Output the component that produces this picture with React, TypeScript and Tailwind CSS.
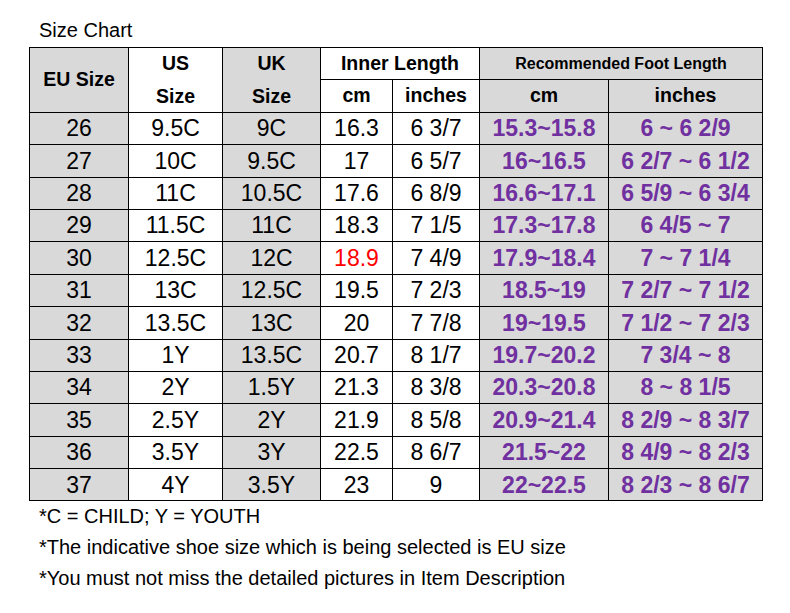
import React from 'react';

type Row = [string, string, string, string, string, string, string];

const rows: Row[] = [
  ['26', '9.5C', '9C', '16.3', '6 3/7', '15.3~15.8', '6 ~ 6 2/9'],
  ['27', '10C', '9.5C', '17', '6 5/7', '16~16.5', '6 2/7 ~ 6 1/2'],
  ['28', '11C', '10.5C', '17.6', '6 8/9', '16.6~17.1', '6 5/9 ~ 6 3/4'],
  ['29', '11.5C', '11C', '18.3', '7 1/5', '17.3~17.8', '6 4/5 ~ 7'],
  ['30', '12.5C', '12C', '18.9', '7 4/9', '17.9~18.4', '7 ~ 7 1/4'],
  ['31', '13C', '12.5C', '19.5', '7 2/3', '18.5~19', '7 2/7 ~ 7 1/2'],
  ['32', '13.5C', '13C', '20', '7 7/8', '19~19.5', '7 1/2 ~ 7 2/3'],
  ['33', '1Y', '13.5C', '20.7', '8 1/7', '19.7~20.2', '7 3/4 ~ 8'],
  ['34', '2Y', '1.5Y', '21.3', '8 3/8', '20.3~20.8', '8 ~ 8 1/5'],
  ['35', '2.5Y', '2Y', '21.9', '8 5/8', '20.9~21.4', '8 2/9 ~ 8 3/7'],
  ['36', '3.5Y', '3Y', '22.5', '8 6/7', '21.5~22', '8 4/9 ~ 8 2/3'],
  ['37', '4Y', '3.5Y', '23', '9', '22~22.5', '8 2/3 ~ 8 6/7'],
];

const gray = 'bg-[#d9d9d9]';
const cell = 'flex items-center justify-center whitespace-nowrap';
const head = `${cell} text-[19.5px] font-bold`;

export default function App() {
  return (
    <div
      className="w-[790px] h-[613px] bg-white pt-[14px] pl-[29px] text-black"
      style={{ fontFamily: '"Liberation Sans", Arial, sans-serif' }}
    >
      <div className="pl-[10px] text-[20px] leading-[32px]">Size Chart</div>

      <div className="mt-px grid w-fit grid-cols-[98px_93px_97px_71px_86px_128px_153px] auto-rows-[31.4px] gap-px bg-black p-px">
        {/* header */}
        <div className={`${head} ${gray} row-span-2`}>EU Size</div>
        <div className={`${head} bg-white row-span-2 flex-col leading-[32.4px]`}>
          <span>US</span>
          <span>Size</span>
        </div>
        <div className={`${head} ${gray} row-span-2 flex-col leading-[32.4px]`}>
          <span>UK</span>
          <span>Size</span>
        </div>
        <div className={`${head} bg-white col-span-2`}>Inner Length</div>
        <div className={`${cell} ${gray} col-span-2 text-[16px] font-bold`}>Recommended Foot Length</div>
        <div className={`${head} bg-white`}>cm</div>
        <div className={`${head} bg-white`}>inches</div>
        <div className={`${head} ${gray}`}>cm</div>
        <div className={`${head} ${gray}`}>inches</div>

        {/* body */}
        {rows.map((r) => (
          <React.Fragment key={r[0]}>
            <div className={`${cell} ${gray} text-[23px]`}>{r[0]}</div>
            <div className={`${cell} bg-white text-[23px]`}>{r[1]}</div>
            <div className={`${cell} ${gray} text-[23px]`}>{r[2]}</div>
            <div className={`${cell} bg-white text-[23px] ${r[3] === '18.9' ? 'text-[#ff0000]' : ''}`}>{r[3]}</div>
            <div className={`${cell} bg-white text-[23px]`}>{r[4]}</div>
            <div className={`${cell} ${gray} text-[23px] font-bold text-[#7030a0]`}>{r[5]}</div>
            <div className={`${cell} ${gray} text-[23px] font-bold text-[#7030a0]`}>{r[6]}</div>
          </React.Fragment>
        ))}
      </div>

      <div className="pl-[10px] text-[20px] leading-[31px]">
        <p>*C = CHILD; Y = YOUTH</p>
        <p>*The indicative shoe size which is being selected is EU size</p>
        <p>*You must not miss the detailed pictures in Item Description</p>
      </div>
    </div>
  );
}
